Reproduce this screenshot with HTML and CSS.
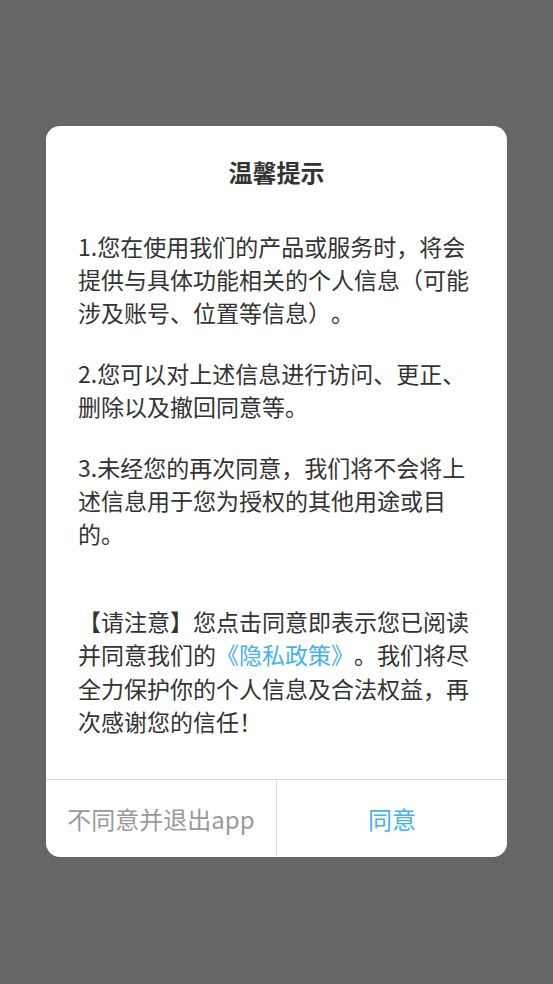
FILE: index.html
```html
<!DOCTYPE html>
<html lang="zh-CN">
<head>
<meta charset="utf-8">
<title>温馨提示</title>
<link rel="stylesheet" href="styles.css">
</head>
<body>
<div class="screen">
  <div class="dialog">
    <div class="content">
      <h1 class="title">温馨提示</h1>
      <p class="para">1.您在使用我们的产品或服务时，将会提供与具体功能相关的个人信息（可能涉及账号、位置等信息）。</p>
      <p class="para">2.您可以对上述信息进行访问、更正、删除以及撤回同意等。</p>
      <p class="para">3.未经您的再次同意，我们将不会将上述信息用于您为授权的其他用途或目的。</p>
      <p class="para notice">【请注意】您点击同意即表示您已阅读并同意我们的<span class="link">《隐私政策》</span>。我们将尽全力保护你的个人信息及合法权益，再次感谢您的信任！</p>
    </div>
    <div class="actions">
      <div class="btn btn-cancel">不同意并退出app</div>
      <div class="btn btn-ok">同意</div>
    </div>
  </div>
</div>
</body>
</html>
```

FILE: styles.css
```css
html, body {
  margin: 0;
  padding: 0;
  height: 100%;
}
body {
  background: #666666;
  font-family: "Noto Sans CJK SC", "Noto Sans", sans-serif;
  text-spacing-trim: space-all;
}
.screen {
  height: 100%;
  display: flex;
  align-items: center;
  justify-content: center;
}
.dialog {
  width: 461px;
  background: #ffffff;
  border-radius: 14px;
  overflow: hidden;
  margin-top: -1px;
}
.content {
  padding: 30px 32px 41px 32px;
}
.title {
  margin: 0 0 42px 0;
  font-size: 24px;
  line-height: 32px;
  font-weight: bold;
  color: #333333;
  text-align: center;
}
.para {
  margin: 0 0 27px 0;
  font-size: 23px;
  line-height: 33.4px;
  color: #333333;
}
.para.notice {
  margin-top: 54px;
  margin-bottom: 0;
}
.link {
  color: #45b1f1;
}
.actions {
  display: flex;
  border-top: 1px solid #dcdcdc;
  height: 77px;
}
.btn {
  flex: 1;
  display: flex;
  align-items: center;
  justify-content: center;
  font-size: 24px;
}
.btn-cancel {
  color: #9a9a9a;
  border-right: 1px solid #dcdcdc;
}
.btn-ok {
  color: #45b1f1;
}
```
